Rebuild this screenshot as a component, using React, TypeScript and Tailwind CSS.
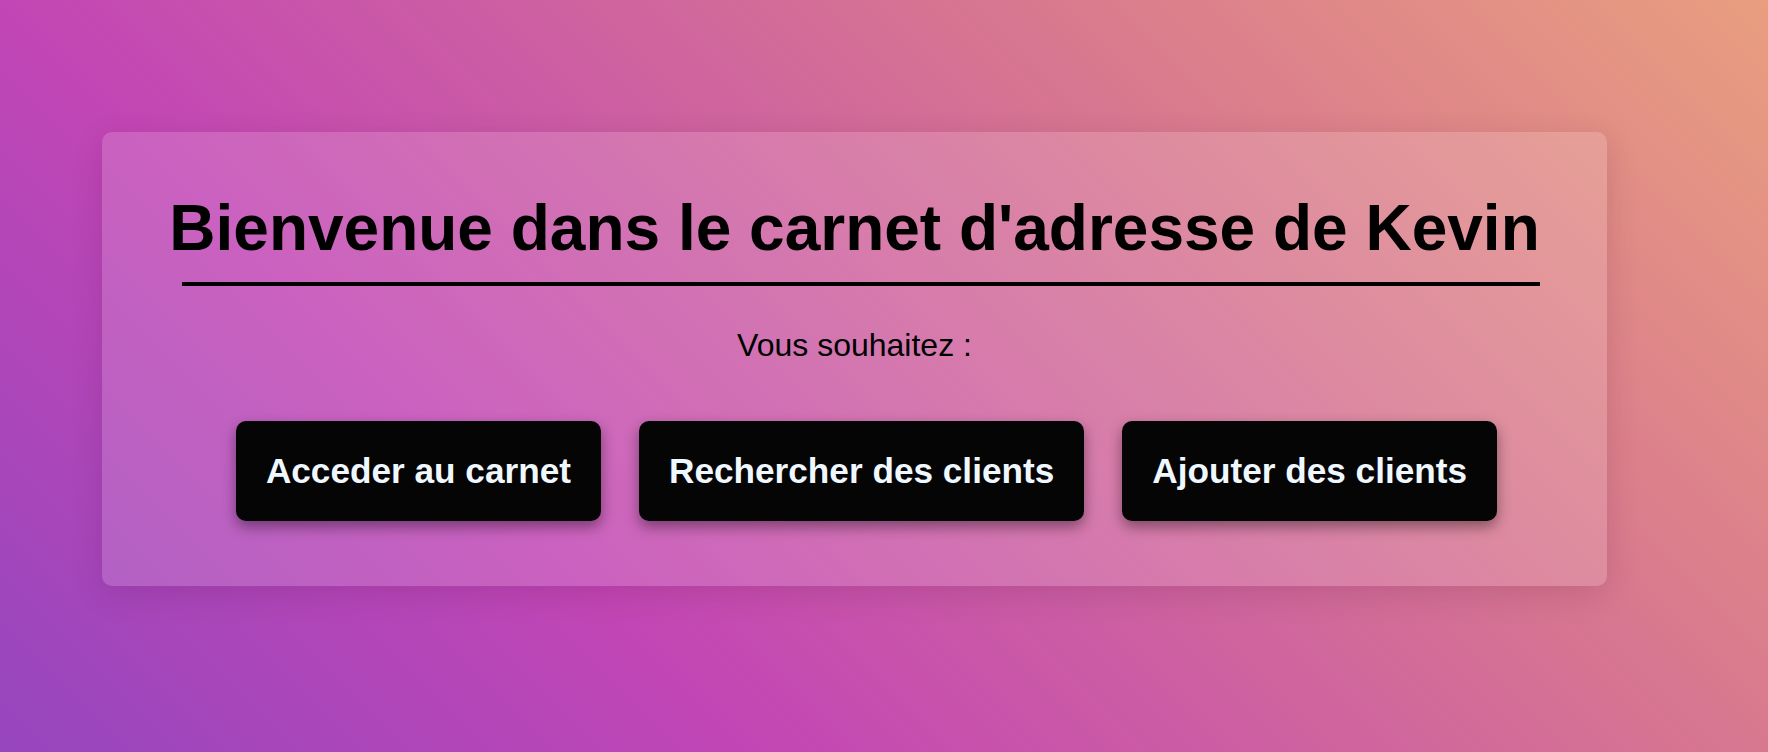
export default function App() {
  const actions = ["Acceder au carnet", "Rechercher des clients", "Ajouter des clients"]

  return (
    <div
      className="w-full h-screen overflow-hidden pt-[132px] pl-[102px] bg-[linear-gradient(45deg,#9646be_0%,#c246b5_30%,#d8788f_70%,#e99e7f_100%)]"
      style={{ fontFamily: '"Liberation Sans", Arial, Helvetica, sans-serif' }}
    >
      {/* Glass card */}
      <div className="w-[1505px] rounded-[10px] bg-white/15 shadow-[0_8px_32px_rgba(60,0,40,0.14)] pt-[59px] pb-[65px]">
        <h1 className="text-center text-[64px] leading-[74px] font-bold text-black">
          Bienvenue dans le carnet d'adresse de Kevin
        </h1>
        <div className="ml-[80px] mt-[17px] w-[1358px] h-[4px] bg-black" />

        <p className="mt-[40px] text-center text-[32px] leading-[38px] text-black">
          Vous souhaitez :
        </p>

        {/* Actions */}
        <div className="mt-[57px] flex justify-center gap-[38px] pl-[24px]">
          {actions.map((label) => (
            <button
              key={label}
              className="bg-[#050505] text-[#f0f8ff] text-[35.2px] leading-[40px] font-bold px-[30px] py-[30px] rounded-[10px] shadow-[0_6px_14px_rgba(0,0,0,0.4)]"
            >
              {label}
            </button>
          ))}
        </div>
      </div>
    </div>
  )
}
